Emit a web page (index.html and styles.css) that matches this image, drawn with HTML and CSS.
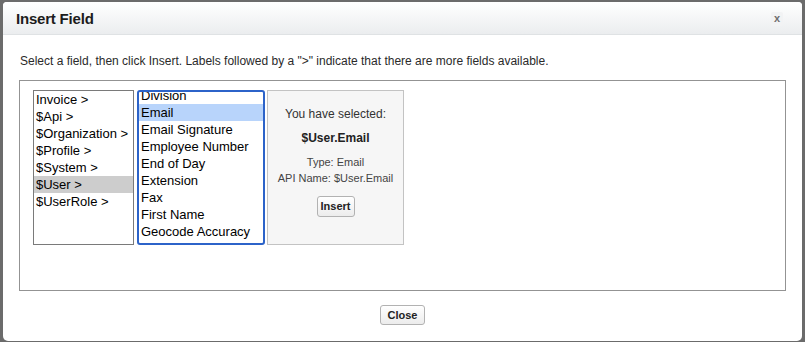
FILE: index.html
```html
<!DOCTYPE html>
<html>
<head>
<meta charset="utf-8">
<link rel="stylesheet" href="styles.css">
</head>
<body>
<div class="dialog">
  <div class="header">
    <div class="title">Insert Field</div>
    <div class="xbtn">x</div>
  </div>
  <div class="content">
    <div class="hint">Select a field, then click Insert. Labels followed by a "&gt;" indicate that there are more fields available.</div>
    <div class="panel">
      <div class="list list-a">
        <div class="opt">Invoice &gt;</div>
        <div class="opt">$Api &gt;</div>
        <div class="opt">$Organization &gt;</div>
        <div class="opt">$Profile &gt;</div>
        <div class="opt">$System &gt;</div>
        <div class="opt sel-gray">$User &gt;</div>
        <div class="opt">$UserRole &gt;</div>
      </div>
      <div class="list list-b">
        <div class="scroll">
          <div class="opt">Division</div>
          <div class="opt sel-blue">Email</div>
          <div class="opt">Email Signature</div>
          <div class="opt">Employee Number</div>
          <div class="opt">End of Day</div>
          <div class="opt">Extension</div>
          <div class="opt">Fax</div>
          <div class="opt">First Name</div>
          <div class="opt">Geocode Accuracy</div>
        </div>
      </div>
      <div class="info">
        <div class="info-head">You have selected:</div>
        <div class="info-name">$User.Email</div>
        <div class="info-meta">Type: Email</div>
        <div class="info-meta">API Name: $User.Email</div>
        <div class="btn btn-insert">Insert</div>
      </div>
    </div>
    <div class="footer">
      <div class="btn btn-close">Close</div>
    </div>
  </div>
</div>
</body>
</html>
```
FILE: styles.css
```css
html, body {
  margin: 0;
  padding: 0;
}
body {
  background: #6b6b6b;
  width: 805px;
  height: 342px;
  overflow: hidden;
  font-family: "Liberation Sans", Arial, sans-serif;
  color: #222;
}
.dialog {
  margin: 2px 0 0 3px;
  width: 799px;
  height: 339px;
  background: #fff;
  border-radius: 4px 4px 5px 5px;
  overflow: hidden;
  display: flex;
  flex-direction: column;
}
.header {
  height: 32px;
  border-bottom: 1px solid #dfe2e4;
  background: linear-gradient(#ffffff, #ebedef);
  display: flex;
  align-items: center;
  justify-content: space-between;
  padding: 0 19px 0 13px;
}
.title {
  font-size: 15px;
  font-weight: bold;
  color: #1c1c1c;
  letter-spacing: -0.2px;
}
.xbtn {
  width: 12px;
  height: 14px;
  line-height: 13px;
  text-align: center;
  font-size: 11px;
  font-weight: bold;
  color: #6e6e6e;
  background: #f2f3f4;
  border-radius: 2px;
  margin-top: 2px;
}
.content {
  padding: 19px 16px 0 16px;
  display: flex;
  flex-direction: column;
}
.hint {
  font-size: 12px;
  line-height: 14px;
  color: #2a2a2a;
  padding-left: 1px;
}
.panel {
  margin-top: 12px;
  height: 191px;
  border: 1px solid #939393;
  padding: 9px 13px;
  display: flex;
  align-items: flex-start;
}
.list {
  height: 155px;
  box-sizing: border-box;
  overflow: hidden;
  background: #fff;
  font-size: 13px;
  color: #000;
}
.list-a {
  width: 101px;
  border: 1px solid #7a7a7a;
  padding-top: 0;
}
.list-b {
  width: 128px;
  margin-left: 3px;
  border: 2px solid #2c63c9;
  border-radius: 3px;
}
.scroll {
  margin-top: -5px;
}
.opt {
  height: 17px;
  line-height: 17px;
  padding-left: 2px;
  white-space: nowrap;
}
.sel-gray {
  background: #cdcdcd;
}
.sel-blue {
  background: #b8d4fb;
}
.info {
  width: 137px;
  height: 155px;
  box-sizing: border-box;
  margin-left: 2px;
  border: 1px solid #c3c3c3;
  background: #f6f6f6;
  display: flex;
  flex-direction: column;
  align-items: center;
  color: #333;
}
.info-head {
  font-size: 12px;
  line-height: 14px;
  margin-top: 16px;
}
.info-name {
  font-size: 12px;
  font-weight: bold;
  line-height: 14px;
  margin-top: 10px;
  color: #222;
}
.info-meta {
  font-size: 11px;
  line-height: 16px;
  color: #444;
}
.info-name + .info-meta {
  margin-top: 9px;
}
.btn {
  box-sizing: border-box;
  border: 1px solid #b2b2b2;
  border-radius: 3px;
  background: linear-gradient(#ffffff, #ececec);
  font-weight: bold;
  color: #222;
  text-align: center;
}
.btn-insert {
  width: 38px;
  height: 21px;
  line-height: 19px;
  font-size: 11px;
  margin-top: 10px;
}
.footer {
  display: flex;
  justify-content: center;
  margin-top: 14px;
}
.btn-close {
  width: 45px;
  height: 20px;
  line-height: 18px;
  font-size: 11px;
}
```
